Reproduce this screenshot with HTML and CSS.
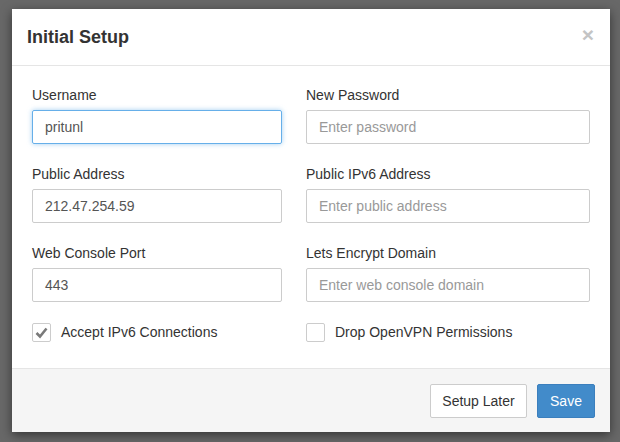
FILE: index.html
```html
<!DOCTYPE html>
<html>
<head>
<meta charset="utf-8">
<link rel="stylesheet" href="styles.css">
</head>
<body>
<div class="backdrop">
  <div class="modal">
    <div class="modal-header">
      <h4 class="modal-title">Initial Setup</h4>
      <span class="close">&times;</span>
    </div>
    <div class="modal-body">
      <div class="grid">
        <div class="group">
          <label class="label">Username</label>
          <div class="input focus">pritunl</div>
        </div>
        <div class="group">
          <label class="label">New Password</label>
          <div class="input placeholder">Enter password</div>
        </div>
        <div class="group">
          <label class="label">Public Address</label>
          <div class="input">212.47.254.59</div>
        </div>
        <div class="group">
          <label class="label">Public IPv6 Address</label>
          <div class="input placeholder">Enter public address</div>
        </div>
        <div class="group">
          <label class="label">Web Console Port</label>
          <div class="input">443</div>
        </div>
        <div class="group">
          <label class="label">Lets Encrypt Domain</label>
          <div class="input placeholder">Enter web console domain</div>
        </div>
        <div class="check">
          <span class="box"><svg width="13" height="13" viewBox="0 0 13 13"><path d="M1.5 7 L5 10.5 L11.5 2.5" fill="none" stroke="#7a7a7a" stroke-width="2.6"/></svg></span>
          <span class="check-text">Accept IPv6 Connections</span>
        </div>
        <div class="check">
          <span class="box"></span>
          <span class="check-text">Drop OpenVPN Permissions</span>
        </div>
      </div>
    </div>
    <div class="modal-footer">
      <button class="btn btn-default">Setup Later</button>
      <button class="btn btn-primary">Save</button>
    </div>
  </div>
</div>
</body>
</html>
```
FILE: styles.css
```css
html, body {
  margin: 0;
  padding: 0;
}
body {
  width: 620px;
  height: 442px;
  overflow: hidden;
  background: #686868;
  font-family: "Liberation Sans", Arial, sans-serif;
  font-size: 14px;
  color: #333;
}
.backdrop {
  padding: 9px 10px 0 12px;
}
.modal {
  width: 598px;
  height: 423px;
  background: #fff;
  box-shadow: 0 3px 10px rgba(0, 0, 0, 0.5);
  display: flex;
  flex-direction: column;
}
.modal-header {
  display: flex;
  justify-content: space-between;
  align-items: flex-start;
  padding: 15px;
  border-bottom: 1px solid #e5e5e5;
  height: 26px;
}
.modal-title {
  margin: 0;
  font-size: 18px;
  line-height: 26px;
  font-weight: bold;
  color: #333;
}
.close {
  font-size: 21px;
  font-weight: bold;
  line-height: 18px;
  color: #c4c4c4;
  margin-right: 1px;
  margin-top: 2px;
}
.modal-body {
  padding: 19px 20px 0 20px;
  flex: 1;
}
.grid {
  display: grid;
  grid-template-columns: 250px 284px;
  column-gap: 24px;
}
.group {
  display: flex;
  flex-direction: column;
  margin-bottom: 20px;
}
.label {
  line-height: 20px;
  margin-bottom: 5px;
  color: #333;
}
.input {
  box-sizing: border-box;
  height: 34px;
  border: 1px solid #ccc;
  border-radius: 2px;
  padding: 0 12px;
  line-height: 32px;
  color: #555;
}
.input.focus {
  border-color: #66afe9;
  box-shadow: 0 0 5px rgba(102, 175, 233, 0.6);
}
.input.placeholder {
  color: #999;
}
.check {
  display: flex;
  align-items: center;
  height: 20px;
}
.box {
  box-sizing: border-box;
  width: 19px;
  height: 19px;
  border: 1px solid #ccc;
  border-radius: 2px;
  display: flex;
  align-items: center;
  justify-content: center;
  margin-right: 10px;
}
.check-text {
  line-height: 20px;
  color: #333;
}
.modal-footer {
  border-top: 1px solid #e5e5e5;
  background: #f5f5f5;
  padding: 15px 15px 14px 15px;
  display: flex;
  justify-content: flex-end;
  gap: 10px;
}
.btn {
  font-family: "Liberation Sans", Arial, sans-serif;
  font-size: 14px;
  height: 34px;
  padding: 0;
  border: 1px solid #ccc;
  border-radius: 2px;
  line-height: 32px;
  white-space: nowrap;
  text-align: center;
}
.btn-default {
  background: #fff;
  color: #333;
  width: 97px;
}
.btn-primary {
  background: #428bca;
  border-color: #3b7fbd;
  color: #fff;
  width: 58px;
}
```
